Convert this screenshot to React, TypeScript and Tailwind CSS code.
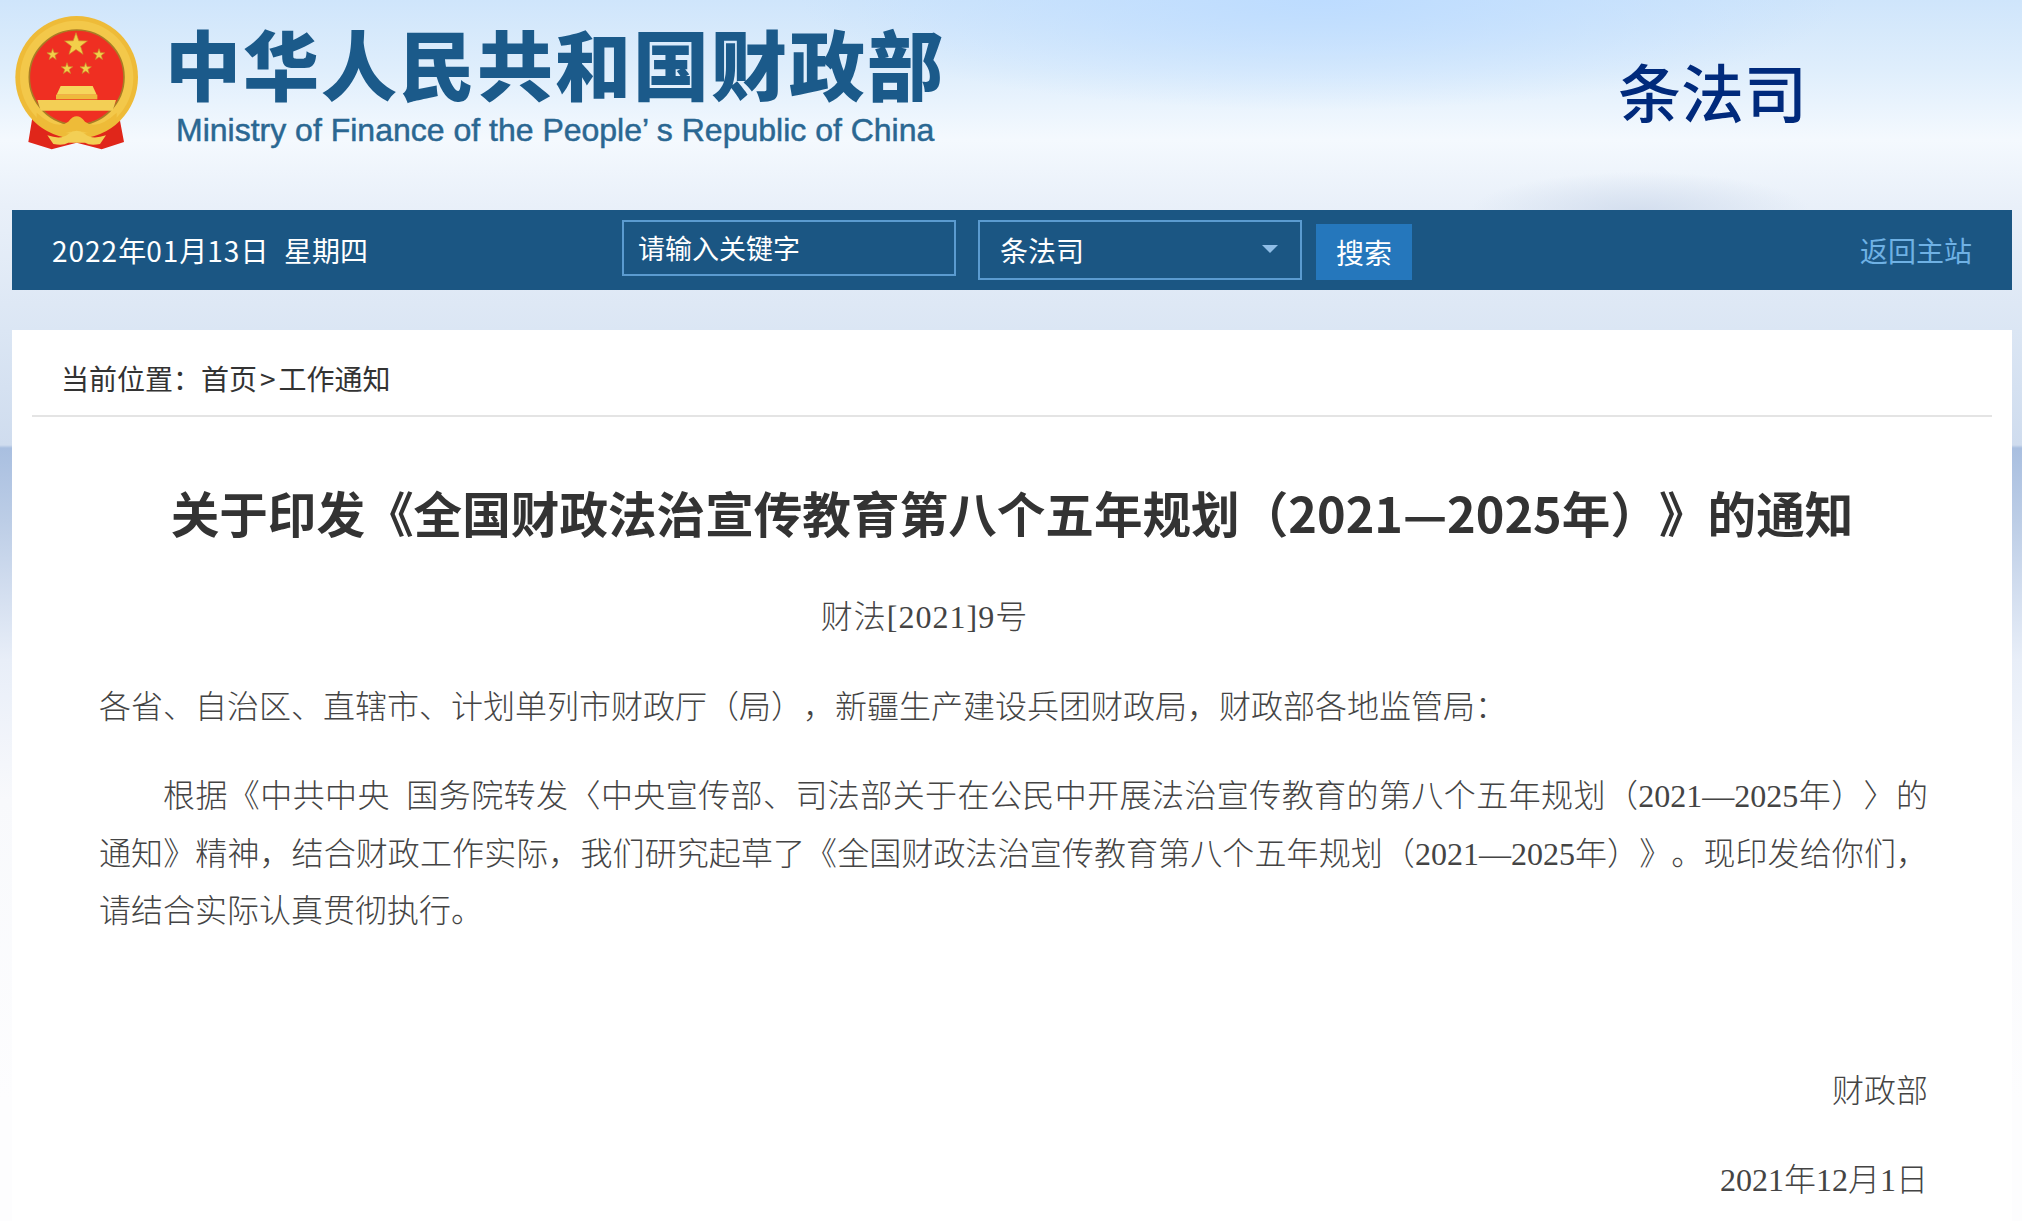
const serif = "font-['Liberation_Serif','Noto_Sans_CJK_SC',serif]";

function Star({ x, y, r }: { x: number; y: number; r: number }) {
  const pts = Array.from({ length: 10 }, (_, i) => {
    const a = -Math.PI / 2 + (i * Math.PI) / 5;
    const d = i % 2 === 0 ? r : r * 0.4;
    return `${x + d * Math.cos(a)},${y + d * Math.sin(a)}`;
  }).join(" ");
  return <polygon points={pts} fill="#f3cf4a" stroke="#c9902a" strokeWidth="2" />;
}

function Emblem() {
  return (
    <svg width="170" height="170" viewBox="0 0 510 510" className="shrink-0">
      <path d="M100 335 L85 426 L155 448 L230 428 L305 448 L372 426 L355 335 L230 400 Z" fill="#e0261a" />
      <circle cx="230" cy="232" r="184" fill="#eebb38" />
      <circle cx="230" cy="232" r="170" fill="#f3c84a" />
      <circle cx="230" cy="232" r="142" fill="#ef2f22" stroke="#a97c25" strokeWidth="5" />
      <Star x={228} y={134} r={36} />
      <Star x={158} y={164} r={18} />
      <Star x={297} y={164} r={18} />
      <Star x={201} y={206} r={18} />
      <Star x={257} y={206} r={18} />
      <path d="M182 258 H278 L290 284 H170 Z" fill="#f6d65c" />
      <rect x="168" y="284" width="124" height="14" fill="#eeb93c" />
      <path d="M112 300 H348 L338 332 H122 Z" fill="#f3cf55" />
      <path d="M110 338 Q170 393 205 365 Q230 333 255 365 Q290 393 350 338 L350 355 Q290 413 250 395 H210 Q170 413 110 355 Z" fill="#eebb38" />
      <path d="M142 406 Q185 420 205 402 Q230 382 255 402 Q275 420 318 406 L300 432 Q270 438 255 428 H205 Q190 438 160 432 Z" fill="#f3cf55" />
    </svg>
  );
}

export default function App() {
  return (
    <div className="min-h-[1221px] overflow-hidden pl-3 pr-[10px] font-['Noto_Sans_CJK_SC',sans-serif] [text-spacing-trim:space-all] bg-[radial-gradient(ellipse_520px_110px_at_1320px_0px,#bddcff,transparent),radial-gradient(ellipse_170px_40px_at_1640px_212px,#d3deee,transparent),linear-gradient(180deg,#cfe5fb_0px,#dfeefc_70px,#f4f9fe_140px,#e9f0f9_205px,#dbe6f4_330px,#cfdcee_445px,#a9bfe0_448px,#bccde6_520px,#e8eef8_660px,#f8f9fc_800px,#fdfdfe_1100px)]">
      <header className="flex h-[210px] items-start">
        <div className="-ml-[12px]"><Emblem /></div>
        <div className="-ml-[5px] mt-[20px] w-[790px]">
          <h1 className="h-[84px] text-[76px] font-black leading-[84px] tracking-[2px] whitespace-nowrap text-[#1b5a8a]">中华人民共和国财政部</h1>
          <p className="ml-[11px] mt-[8px] font-['Liberation_Sans',sans-serif] text-[32px] leading-[36px] whitespace-nowrap text-[#2a6792] [-webkit-text-stroke:0.5px_#2a6792]">Ministry of Finance of the People’ s Republic of China</p>
        </div>
        <div className="ml-auto mr-[205px] mt-[50px] text-[63px] font-medium leading-[80px] text-[#002a7c]">条法司</div>
      </header>

      <nav className="flex h-[80px] items-start bg-[#1b5683] text-[28px] text-white">
        <div className="ml-[40px] mt-[22px] w-[570px] leading-[36px] whitespace-pre">
          <span className="tracking-[1px]">2022</span>年<span className="tracking-[1px]">01</span>月<span className="tracking-[1px]">13</span>日  <span className="ml-[3px]">星期四</span>
        </div>
        <div className="mt-[10px] h-[56px] w-[334px] border-2 border-[#5b9bd0] pl-[14px] pt-[1px] text-[27px] leading-[50px]">请输入关键字</div>
        <div className="ml-[22px] mt-[10px] flex h-[60px] w-[324px] items-center justify-between border-2 border-[#5b9bd0] pl-[20px] pr-[22px]">
          <span>条法司</span>
          <span className="mb-[2px] h-0 w-0 border-x-[8px] border-t-[8px] border-x-transparent border-t-[#8fbde6]" />
        </div>
        <button className="ml-[14px] mt-[14px] h-[56px] w-[96px] bg-[#2577bc] text-center leading-[56px]">搜索</button>
        <a className="ml-auto mr-[40px] mt-[22px] leading-[36px] text-[#6fb1e4]">返回主站</a>
      </nav>

      <main className="mt-[40px] bg-white pb-[40px]">
        <div className="mx-[20px] h-[87px] border-b-2 border-[#e4e4e4] pl-[29px] pt-[30px] text-[28px] leading-[36px] text-[#333]">
          当前位置：首页<span className="px-[3px]">&gt;</span>工作通知
        </div>
        <h2 className="mt-[59px] text-center text-[48.6px] font-bold leading-[72px] whitespace-nowrap text-[#333]">关于印发《全国财政法治宣传教育第八个五年规划（2021—2025年）》的通知</h2>
        <div className={`${serif} mt-[41px] pl-[87px] pr-[84px] text-[32px] leading-[57.6px] font-light text-[#444] [word-spacing:8px] [&_p]:mb-[32px]`}>
          <p className="pr-[178px] text-center tracking-[1px]">财法[2021]9号</p>
          <p>各省、自治区、直辖市、计划单列市财政厅（局），新疆生产建设兵团财政局，财政部各地监管局：</p>
          <p className="indent-[64px] text-justify">根据《中共中央 国务院转发〈中央宣传部、司法部关于在公民中开展法治宣传教育的第八个五年规划（2021—2025年）〉的通知》精神，结合财政工作实际，我们研究起草了《全国财政法治宣传教育第八个五年规划（2021—2025年）》。现印发给你们，请结合实际认真贯彻执行。</p>
          <p className="h-[57.6px]" />
          <p className="text-right">财政部</p>
          <p className="text-right">2021年12月1日</p>
        </div>
      </main>
    </div>
  );
}
